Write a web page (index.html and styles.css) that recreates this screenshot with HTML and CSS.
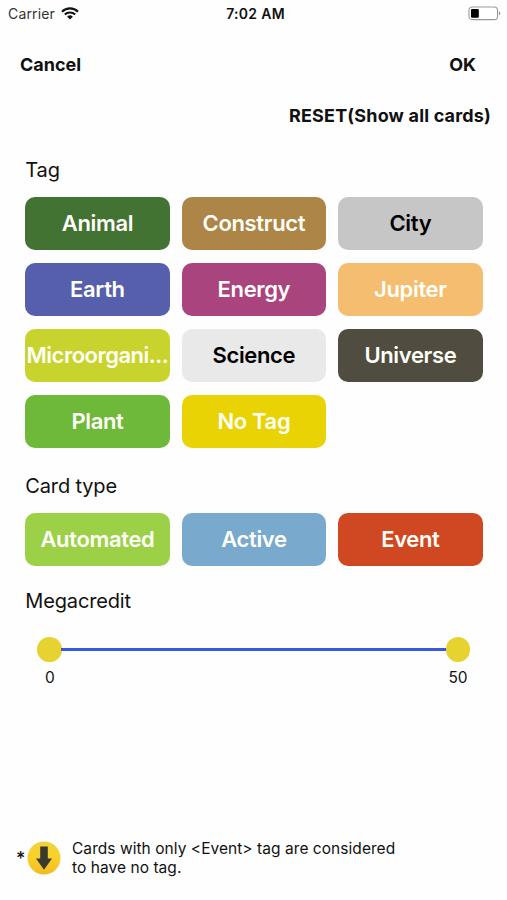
FILE: index.html
```html
<!DOCTYPE html>
<html lang="en">
<head>
<meta charset="utf-8">
<title>Card filter</title>
<link rel="stylesheet" href="styles.css">
</head>
<body>
<div class="screen">
  <header class="status">
    <div class="status-left"><span class="carrier">Carrier</span>
      <svg class="wifi" width="18" height="13" viewBox="0 0 18 13" fill="none" stroke="#111" stroke-width="2.1"><path d="M1 4.7a11.4 11.4 0 0 1 16 0"/><path d="M3.8 7.6a7.5 7.5 0 0 1 10.4 0"/><path d="M6.1 9.7a4.2 4.2 0 0 1 5.8 0L9 12.6z" fill="#111" stroke="none"/></svg>
    </div>
    <span class="time">7:02 AM</span>
    <svg class="battery" width="33" height="15" viewBox="0 0 33 15"><rect x="1" y="1" width="28.5" height="12.6" rx="3.2" fill="#fff" stroke="#999" stroke-width="1.1"/><rect x="3" y="3" width="7.8" height="8.7" rx="1" fill="#000"/><path d="M30.9 5.2q1.4.5 1.4 2.1t-1.4 2.1z" fill="#999"/></svg>
  </header>
  <nav class="actions"><span class="cancel">Cancel</span><span class="ok">OK</span></nav>
  <div class="reset"><span>RESET(Show all cards)</span></div>
  <main>
    <h2 class="tag-title"><span>Tag</span></h2>
    <div class="grid">
      <div class="chip animal"><span>Animal</span></div>
      <div class="chip construct"><span>Construct</span></div>
      <div class="chip city"><span>City</span></div>
      <div class="chip earth"><span>Earth</span></div>
      <div class="chip energy"><span>Energy</span></div>
      <div class="chip jupiter"><span>Jupiter</span></div>
      <div class="chip micro"><span>Microorgani...</span></div>
      <div class="chip science"><span>Science</span></div>
      <div class="chip universe"><span>Universe</span></div>
      <div class="chip plant"><span>Plant</span></div>
      <div class="chip notag"><span>No Tag</span></div>
    </div>
    <h2 class="type-title"><span>Card type</span></h2>
    <div class="grid">
      <div class="chip automated"><span>Automated</span></div>
      <div class="chip active"><span>Active</span></div>
      <div class="chip event"><span>Event</span></div>
    </div>
    <h2 class="mega-title"><span>Megacredit</span></h2>
    <div class="slider"><i class="knob"></i><i class="track"></i><i class="knob"></i></div>
    <div class="values"><span>0</span><span>50</span></div>
  </main>
  <footer class="note">
    <span class="star">*</span>
    <svg class="coin" width="34" height="34" viewBox="0 0 34 34"><defs><linearGradient id="gold" x1="0" y1="0" x2="0" y2="1"><stop offset="0" stop-color="#eed43c"/><stop offset=".5" stop-color="#fad02a"/><stop offset="1" stop-color="#eebc20"/></linearGradient></defs><circle cx="17" cy="17" r="16.5" fill="url(#gold)"/><path d="M13.2 5.5h7.6v12h4.2L17 28.8 9 17.5h4.2z" fill="#39392d"/></svg>
    <p class="note-text">Cards with only &lt;Event&gt; tag are considered<br>to have no tag.</p>
  </footer>
</div>
</body>
</html>
```
FILE: styles.css
```css
* { box-sizing: border-box; }
body { margin: 0; background: #fefefe; color: #111; font-family: Inter, "Liberation Sans", sans-serif; }
.screen { display: flex; flex-direction: column; width: 507px; height: 900px; overflow: hidden; }
.status { display: grid; grid-template-columns: 1fr auto 1fr; align-items: center; height: 27px; padding: 0 6px 0 8px; font-size: 14px; }
.status-left { display: flex; align-items: center; gap: 6px; }
.carrier { color: #333; letter-spacing: .15px; }
.time { padding-left: 2px; font-weight: 600; letter-spacing: .3px; }
.battery { justify-self: end; }
.actions { display: flex; justify-content: space-between; align-items: center; height: 74px; padding: 0 31px 0 20px; font-size: 18px; font-weight: 700; }
.reset { display: flex; justify-content: flex-end; align-items: center; height: 28px; padding-right: 16px; font-size: 18px; font-weight: 700; letter-spacing: .17px; white-space: nowrap; }
main { padding: 0 24.5px 0 25.3px; }
h2 { display: flex; align-items: center; margin: 0; font-size: 20px; font-weight: 400; letter-spacing: -.15px; white-space: nowrap; }
.tag-title { height: 67.7px; padding-top: 14px; }
.type-title { height: 64.4px; padding-top: 11px; }
.mega-title { height: 70px; padding-bottom: 1px; }
.grid { display: grid; grid-template-columns: repeat(3, minmax(0, 1fr)); grid-auto-rows: 53.6px; gap: 12.4px 12.2px; }
.chip { display: flex; align-items: center; justify-content: center; min-width: 0; padding-bottom: 1px; border-radius: 10px; color: #fffffa; font-size: 22px; font-weight: 600; letter-spacing: -.35px; white-space: nowrap; }
.animal { background: #437332; }
.construct { background: #ad8547; }
.city { background: #c6c6c6; color: #000; }
.earth { background: #565fab; }
.energy { background: #aa447e; }
.jupiter { background: #f4bd70; }
.micro { background: #c9d32d; letter-spacing: -.5px; }
.science { background: #e9e9e9; color: #000; }
.universe { background: #514c40; }
.plant { background: #6fb93a; }
.notag { background: #e9d304; }
.automated { background: #9bd047; }
.active { background: #79a9cc; }
.event { background: #cf4822; }
.slider { display: flex; align-items: center; height: 27px; padding: 0 12.2px; }
.knob { flex: none; width: 24.6px; height: 24.6px; border-radius: 50%; background: #e7d330; }
.track { flex: 1; height: 3px; margin: 0 -1px; background: #3858e0; }
.values { display: flex; justify-content: space-between; padding: 0 12.2px; margin-top: 5px; font-size: 15.5px; line-height: 20px; }
.values span { width: 24.6px; text-align: center; }
.note { display: flex; align-items: center; height: 38px; margin-top: auto; margin-bottom: 23px; padding-left: 16px; }
.star { width: 11px; font-size: 18px; font-weight: 500; }
.note-text { margin: 0 0 0 11px; font-size: 15.5px; line-height: 19px; letter-spacing: .05px; white-space: nowrap; }
```
